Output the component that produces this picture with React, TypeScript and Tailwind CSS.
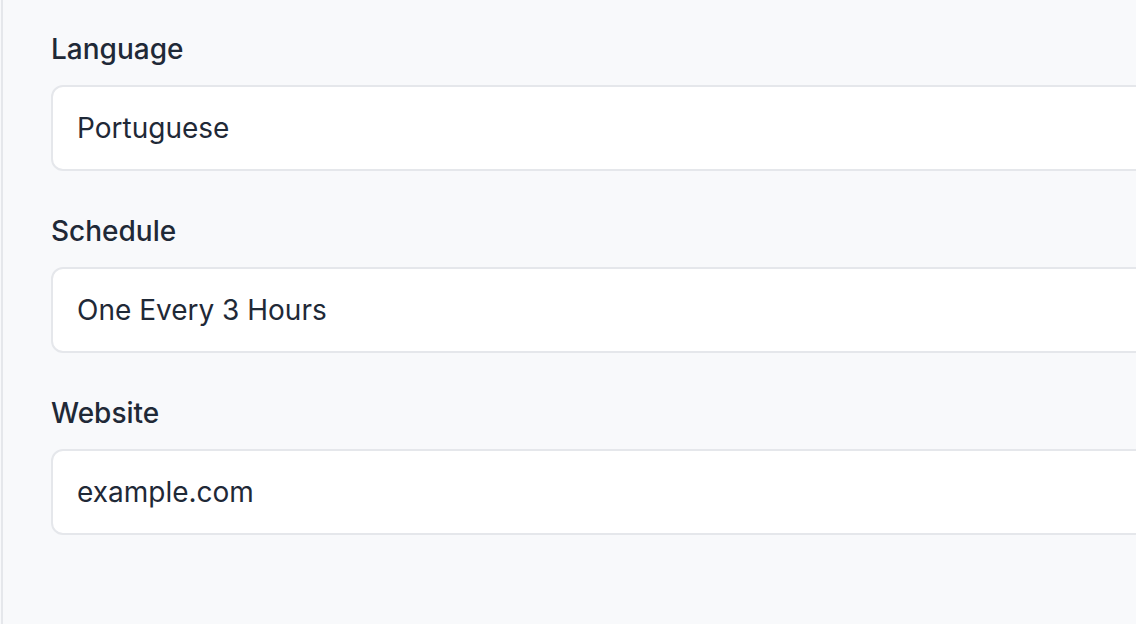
import React from 'react';

interface FieldProps {
  label: string;
  value: string;
}

function Field({ label, value }: FieldProps) {
  return (
    <div className="flex flex-col gap-4">
      <label className="text-[28px] leading-[40px] font-medium text-[#1f2937]">
        {label}
      </label>
      <div className="flex items-center h-[86px] w-[1200px] shrink-0 rounded-[12px] border-2 border-[#e5e7eb] bg-white px-6 text-[28px] leading-[40px] text-[#1f2937]">
        {value}
      </div>
    </div>
  );
}

export default function App() {
  const fields: FieldProps[] = [
    { label: 'Language', value: 'Portuguese' },
    { label: 'Schedule', value: 'One Every 3 Hours' },
    { label: 'Website', value: 'example.com' },
  ];

  return (
    <div
      className="h-[624px] w-[1136px] overflow-hidden bg-[#f8f9fb] pl-px"
      style={{ fontFamily: 'Inter, "Noto Sans", sans-serif' }}
    >
      <div className="h-full border-l-2 border-[#e5e7eb] pl-12 pt-[29px]">
        <div className="flex flex-col gap-10">
          {fields.map((field) => (
            <Field key={field.label} label={field.label} value={field.value} />
          ))}
        </div>
      </div>
    </div>
  );
}
